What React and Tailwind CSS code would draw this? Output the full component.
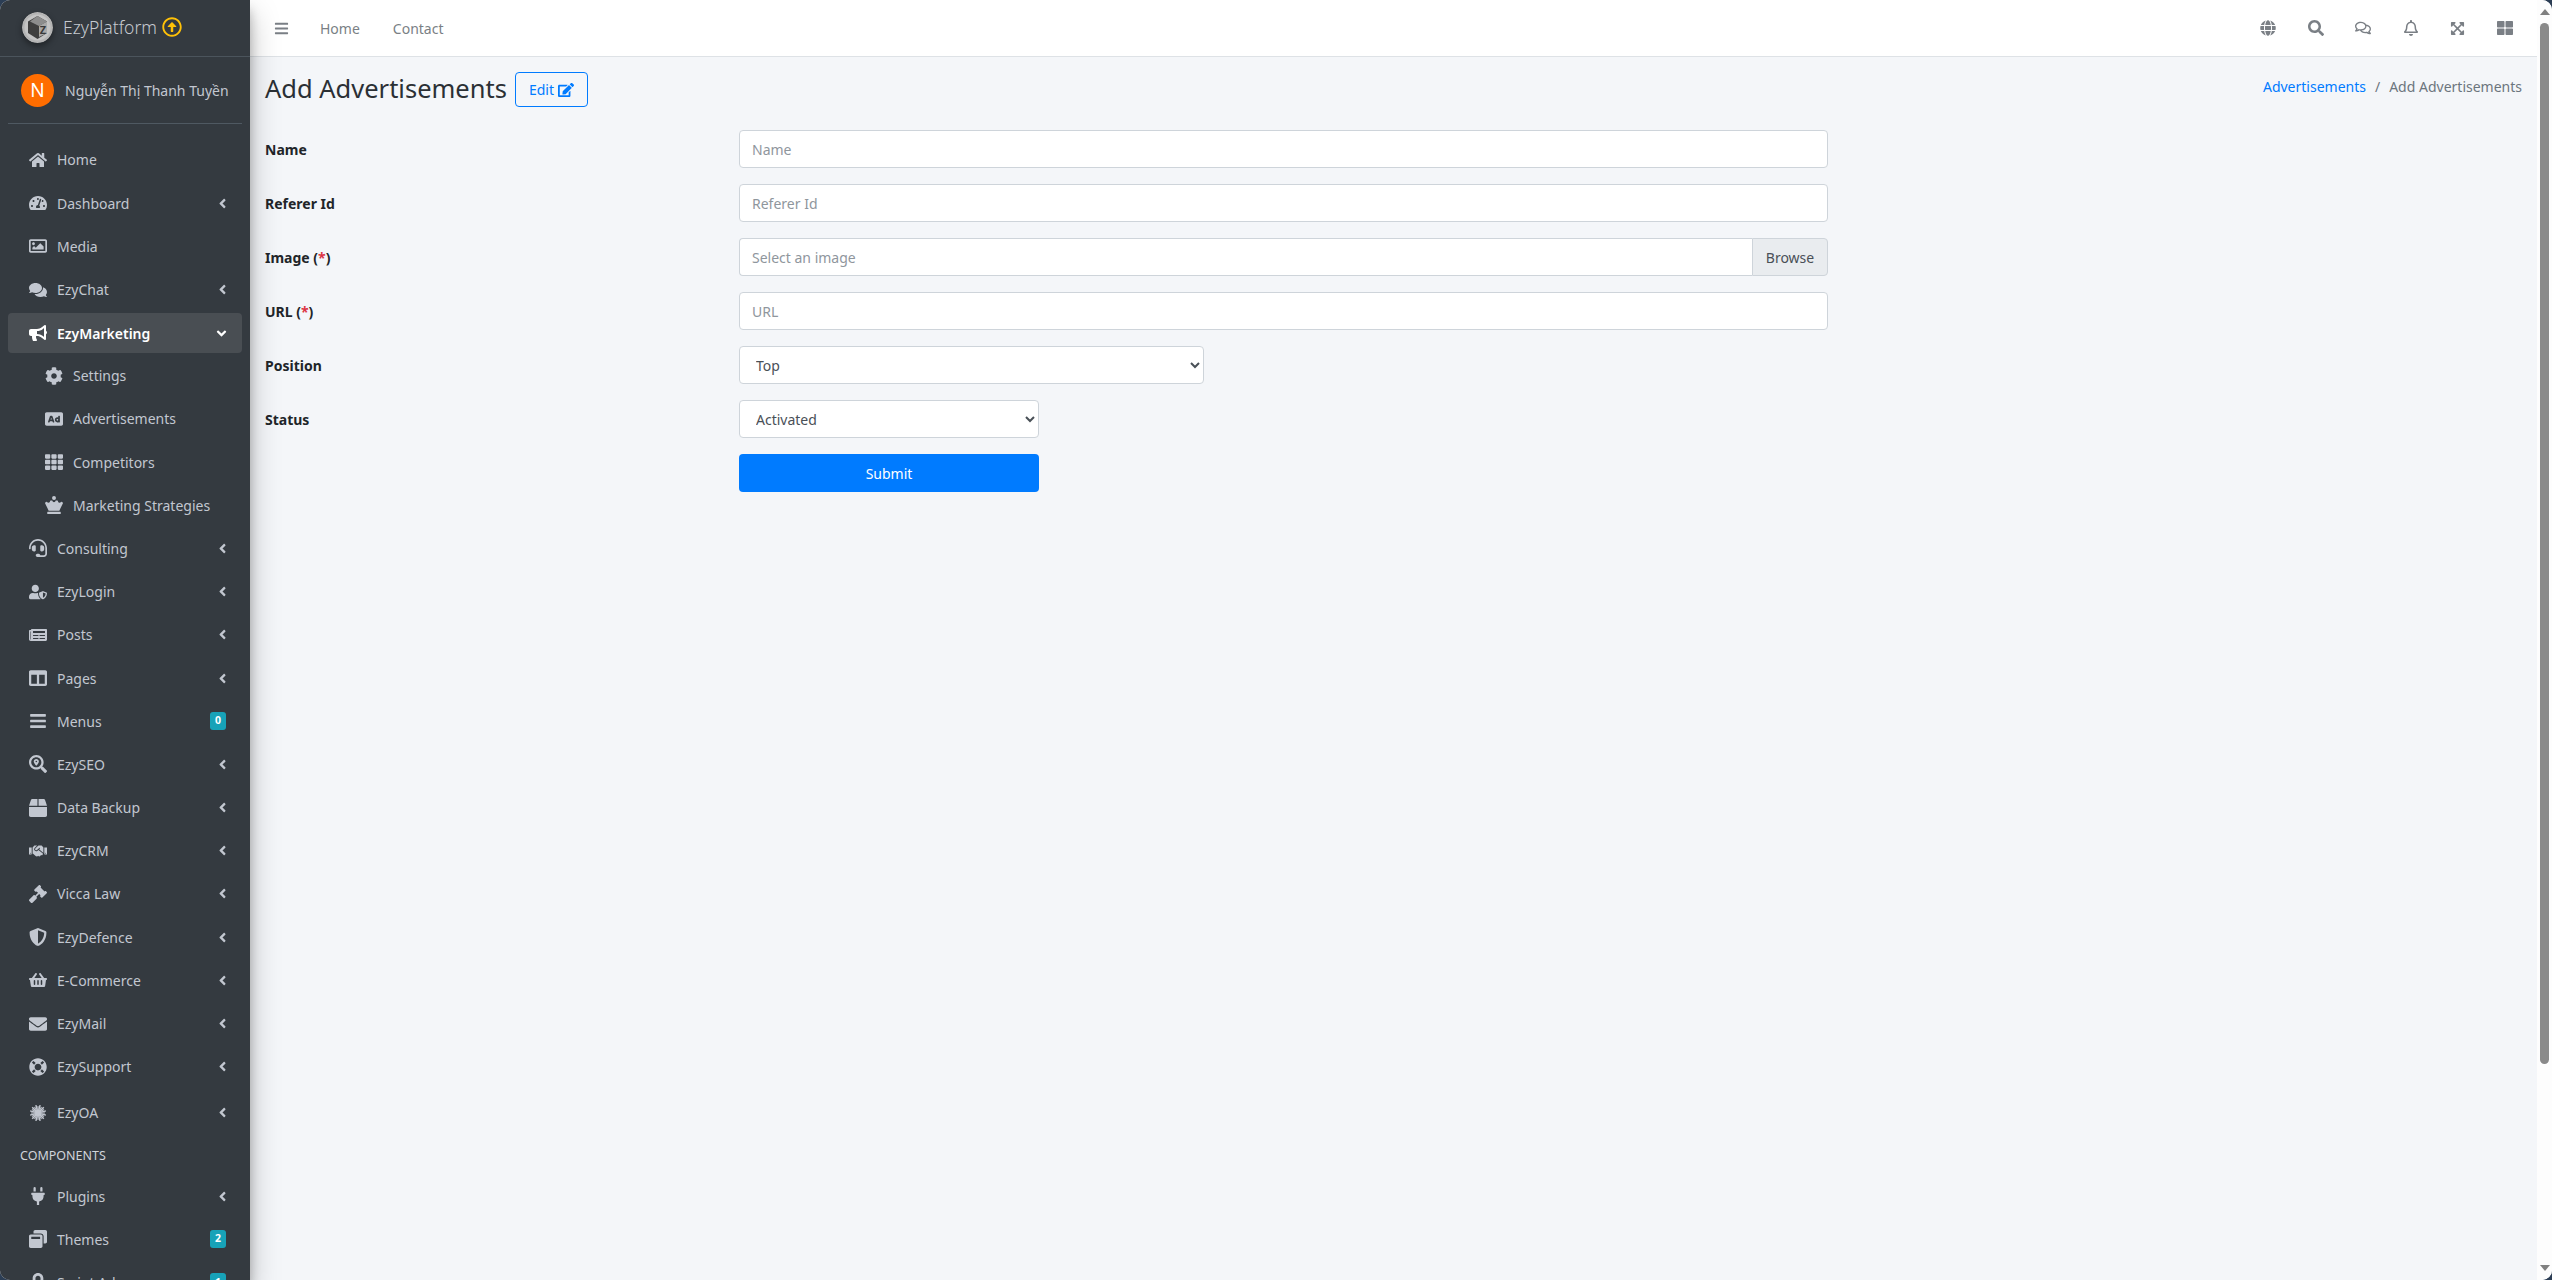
import React from 'react';
import {
    FaHome, FaTachometerAlt, FaRegImage, FaComments, FaBullhorn, FaCog, FaAd, FaTh, FaChessQueen,
    FaHeadset, FaUserShield, FaNewspaper, FaColumns, FaBars, FaSearchLocation, FaBox, FaHandshake,
    FaGavel, FaShieldAlt, FaShoppingBasket, FaEnvelope, FaLifeRing, FaPlug, FaWindowRestore,
    FaLock, FaAngleLeft, FaAngleDown, FaGlobe, FaSearch, FaRegComments, FaRegBell,
    FaExpandArrowsAlt, FaThLarge, FaEdit, FaRegArrowAltCircleUp,
} from 'react-icons/fa';

const font = { fontFamily: '"Noto Sans", sans-serif' };

// burst icon of the EzyOA entry
const BurstIcon = () => (
    <svg viewBox="0 0 18 18" className="h-[18px] w-[18px]" stroke="currentColor" strokeWidth="1.5">
        {[0, 30, 60, 90, 120, 150].map((a) => (
            <line key={a} x1="9" y1="0.8" x2="9" y2="17.2" transform={`rotate(${a + 15} 9 9)`} />
        ))}
        {[0, 30, 60, 90, 120, 150].map((a) => (
            <line key={a} x1="9" y1="2" x2="9" y2="16" strokeWidth="1" transform={`rotate(${a} 9 9)`} />
        ))}
    </svg>
);

const Logo = () => (
    <svg viewBox="0 0 31 31" className="h-[31px] w-[31px] rounded-full shadow-[0_3px_6px_rgba(0,0,0,0.4)]">
        <circle cx="15.5" cy="15.5" r="15.5" fill="#b4b4b4" />
        <circle cx="15.5" cy="15.5" r="13" fill="#c4c4c4" />
        <polygon points="15.5,4 25,9.5 25,21 15.5,27 6,21 6,9.5" fill="#3f3f3f" />
        <polygon points="15.5,4 25,9.5 17,14 8,9.5" fill="#8d8d8d" />
        <polygon points="17,14 25,9.5 25,21 17,25" fill="#a9a9a9" />
        <text x="21" y="22" fontSize="11" fontWeight="700" textAnchor="middle" fill="#3a3a3a">Z</text>
    </svg>
);

const menuTop = [
    { label: 'Home', icon: FaHome },
    { label: 'Dashboard', icon: FaTachometerAlt, arrow: true },
    { label: 'Media', icon: FaRegImage },
    { label: 'EzyChat', icon: FaComments, arrow: true },
];

const subMenu = [
    { label: 'Settings', icon: FaCog },
    { label: 'Advertisements', icon: FaAd },
    { label: 'Competitors', icon: FaTh },
    { label: 'Marketing Strategies', icon: FaChessQueen },
];

const menuBottom = [
    { label: 'Consulting', icon: FaHeadset, arrow: true },
    { label: 'EzyLogin', icon: FaUserShield, arrow: true },
    { label: 'Posts', icon: FaNewspaper, arrow: true },
    { label: 'Pages', icon: FaColumns, arrow: true },
    { label: 'Menus', icon: FaBars, badge: '0' },
    { label: 'EzySEO', icon: FaSearchLocation, arrow: true },
    { label: 'Data Backup', icon: FaBox, arrow: true },
    { label: 'EzyCRM', icon: FaHandshake, arrow: true },
    { label: 'Vicca Law', icon: FaGavel, arrow: true },
    { label: 'EzyDefence', icon: FaShieldAlt, arrow: true },
    { label: 'E-Commerce', icon: FaShoppingBasket, arrow: true },
    { label: 'EzyMail', icon: FaEnvelope, arrow: true },
    { label: 'EzySupport', icon: FaLifeRing, arrow: true },
];

const SideItem = ({ item, sub }) => {
    const Icon = item.icon;
    return (
        <div className={`flex h-[43.2px] shrink-0 items-center text-[#c2c7d0] ${sub ? 'pl-[43px]' : 'pl-[27px]'} pr-[24px]`}>
            <span className="flex w-[22px] shrink-0 justify-center">
                {item.burst ? <BurstIcon /> : <Icon className="h-[18px] w-auto max-w-none" />}
            </span>
            <span className="ml-[8px] text-[14px]">{item.label}</span>
            {item.arrow && <FaAngleLeft className="-mr-[4px] ml-auto text-[15px]" />}
            {item.badge && (
                <span className="ml-auto flex h-[18px] w-[16px] items-center justify-center rounded-[3px] bg-[#17a2b8] text-[10.5px] font-bold text-white">{item.badge}</span>
            )}
        </div>
    );
};

const Sidebar = () => (
    <aside className="z-10 flex h-full w-[250px] shrink-0 flex-col overflow-hidden bg-[#343a40] shadow-[0_14px_28px_rgba(0,0,0,0.25),0_10px_10px_rgba(0,0,0,0.22)]">
        <div className="flex h-[57px] shrink-0 items-center border-b border-[#4b545c] pb-[2px] pl-[22px]">
            <Logo />
            <span className="ml-[10px] text-[17.5px] font-light text-[#c5c9cf]">EzyPlatform</span>
            <FaRegArrowAltCircleUp className="ml-[5px] text-[20px] text-[#ffc107]" />
        </div>
        <div className="mx-[8px] flex h-[67px] shrink-0 items-center border-b border-[#4f5962] pl-[13px]">
            <div className="flex h-[33px] w-[33px] items-center justify-center rounded-full bg-[#ff6d00] text-[19px] text-white">N</div>
            <span className="ml-[11px] whitespace-nowrap text-[14px] text-[#c2c7d0]">Nguyễn Thị Thanh Tuyền</span>
        </div>
        <nav className="mt-[14.4px] flex flex-col">
            {menuTop.map((item) => <SideItem key={item.label} item={item} />)}
            <div className="mx-[8px] mb-[1px] mt-[2px] flex h-[40px] shrink-0 items-center rounded-[4px] bg-[#494e53] pl-[19px] pr-[16px] font-semibold text-white">
                <span className="flex w-[22px] shrink-0 justify-center"><FaBullhorn className="h-[18px] w-auto max-w-none" /></span>
                <span className="ml-[8px] text-[14px]">EzyMarketing</span>
                <FaAngleDown className="-mr-[3px] ml-auto text-[15px]" />
            </div>
            {subMenu.map((item) => <SideItem key={item.label} item={item} sub />)}
            {menuBottom.map((item) => <SideItem key={item.label} item={item} />)}
            <div className="mt-[3px]">
                <SideItem item={{ label: 'EzyOA', burst: true, arrow: true }} />
            </div>
            <div className="flex h-[43px] shrink-0 items-center pl-[20px] text-[12.5px] text-[#d0d4db]">COMPONENTS</div>
            <div className="-mt-[3px]">
                <SideItem item={{ label: 'Plugins', icon: FaPlug, arrow: true }} />
            </div>
            <SideItem item={{ label: 'Themes', icon: FaWindowRestore, badge: '2' }} />
            <SideItem item={{ label: 'Script Ads', icon: FaLock, badge: '1' }} />
        </nav>
    </aside>
);

const topIcons = [
    { icon: FaGlobe, size: 'h-[16px]' },
    { icon: FaSearch, size: 'h-[16px]' },
    { icon: FaRegComments, size: 'h-[16px]' },
    { icon: FaRegBell, size: 'h-[16px]' },
    { icon: FaExpandArrowsAlt, size: 'h-[15px]' },
    { icon: FaThLarge, size: 'h-[16px]' },
];

const Navbar = () => (
    <header className="flex h-[57px] shrink-0 items-center border-b border-[#dee2e6] bg-white pl-[24px] pr-[24px] text-[#7a7f85]">
        <FaBars className="text-[15px]" />
        <span className="ml-[31px] text-[14px]">Home</span>
        <span className="ml-[33px] text-[14px]">Contact</span>
        <div className="ml-auto flex items-center gap-[31.6px]">
            {topIcons.map((t, i) => {
                const Icon = t.icon;
                return <Icon key={i} className={`${t.size} w-auto max-w-none`} />;
            })}
        </div>
    </header>
);

const inputCls = 'h-[38px] w-full rounded-[4px] border border-[#ced4da] bg-white px-[12px] text-[14px] text-[#495057] placeholder:text-[#8f969d] outline-none';

const Row = ({ label, req, children }) => (
    <div className="mb-[16px] flex items-center">
        <label className="w-[474px] shrink-0 text-[14px] font-bold text-[#212529]">
            {label}{req && <> (<span className="text-[#dc3545]">*</span>)</>}
        </label>
        {children}
    </div>
);

const Form = () => (
    <form className="w-[1563px] pt-[23px]">
        <Row label="Name"><input className={inputCls} placeholder="Name" /></Row>
        <Row label="Referer Id"><input className={inputCls} placeholder="Referer Id" /></Row>
        <Row label="Image" req>
            <div className="flex w-full">
                <input className={`${inputCls} rounded-r-none border-r-0`} placeholder="Select an image" />
                <button type="button" className="h-[38px] w-[76px] shrink-0 rounded-r-[4px] border border-[#ced4da] bg-[#e9ecef] text-[14px] text-[#495057]">Browse</button>
            </div>
        </Row>
        <Row label="URL" req><input className={inputCls} placeholder="URL" /></Row>
        <Row label="Position">
            <select className={`${inputCls} !w-[465px]`} defaultValue="Top">
                <option>Top</option>
            </select>
        </Row>
        <Row label="Status">
            <select className={`${inputCls} !w-[300px]`} defaultValue="Activated">
                <option>Activated</option>
            </select>
        </Row>
        <div className="flex">
            <div className="w-[474px] shrink-0" />
            <button type="button" className="h-[38px] w-[300px] rounded-[4px] bg-[#007bff] text-[14px] text-white">Submit</button>
        </div>
    </form>
);

export default function App() {
    return (
        <div className="h-screen w-full bg-[#2c3e55]" style={font}>
            <div className="flex h-full w-full overflow-hidden rounded-[10px] bg-white">
                <Sidebar />
                <div className="flex min-w-0 flex-1">
                    <div className="flex min-w-0 flex-1 flex-col">
                        <Navbar />
                        <main className="flex-1 bg-[#f4f6f9] px-[15px]">
                            <div className="flex items-start justify-between pt-[15px]">
                                <div className="flex items-center">
                                    <h1 className="pb-[3px] text-[25.5px] leading-[32px] text-[#2b3035]">Add Advertisements</h1>
                                    <button type="button" className="ml-[8px] flex h-[35px] w-[73px] items-center justify-center gap-[4px] rounded-[4px] border border-[#007bff] text-[14px] text-[#007bff]">
                                        Edit <FaEdit className="h-[16px] w-auto max-w-none" />
                                    </button>
                                </div>
                                <div className="mt-[4px] flex text-[14px]">
                                    <span className="text-[#007bff]">Advertisements</span>
                                    <span className="px-[9px] text-[#6c757d]">/</span>
                                    <span className="text-[#6c757d]">Add Advertisements</span>
                                </div>
                            </div>
                            <Form />
                        </main>
                    </div>
                    <div className="flex w-[15px] shrink-0 flex-col items-center bg-[#fdfdfd] pt-[9px]">
                        <div className="h-0 w-0 border-x-[5px] border-b-[6px] border-x-transparent border-b-[#808080]" />
                        <div className="mt-[8px] h-[1041px] w-[9px] shrink-0 rounded-full bg-[#8a8a8a]" />
                        <div className="mb-[9px] mt-auto h-0 w-0 border-x-[5px] border-t-[6px] border-x-transparent border-t-[#808080]" />
                    </div>
                </div>
            </div>
        </div>
    );
}
